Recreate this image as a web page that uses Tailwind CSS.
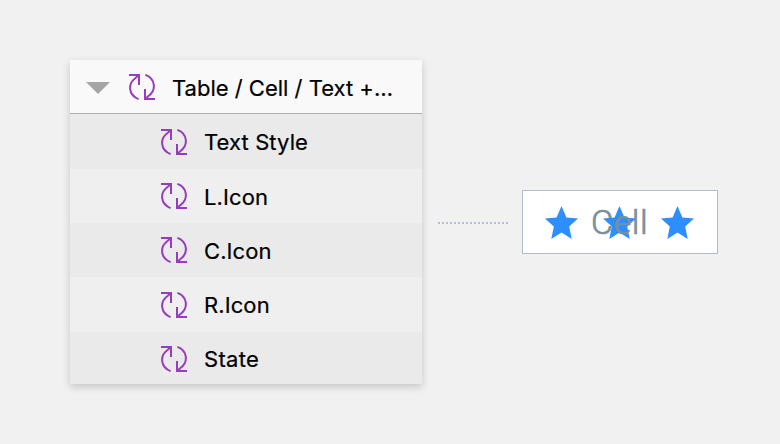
<!DOCTYPE html>
<html lang="en">
<head>
    <meta charset="UTF-8">
    <meta name="viewport" content="width=device-width, initial-scale=1.0">
    <title>Table Cell Overrides</title>
    <script src="https://cdn.jsdelivr.net/npm/@tailwindcss/browser@4"></script>
</head>
<body class="bg-[#f1f1f1] h-screen overflow-hidden font-['Inter',sans-serif] text-[22px] text-black">
    <!-- Shared shapes -->
    <svg class="hidden">
        <symbol id="swap" viewBox="0 0 26 26">
            <g fill="none" stroke="#963cbd" stroke-width="2">
                <path d="M0 1H10V11M10 1L6.5 4C-1.4 9.6-0.8 21.2 9.6 25.1" />
                <path d="M26 25H16V15M16 25L19.5 22C27.4 16.4 26.8 4.8 16.4 0.9" />
            </g>
        </symbol>
        <symbol id="star" viewBox="0 0 33 33">
            <path fill="#2d8eff" d="M16.5 0L21.4 11.6L33 12.6L24.2 20.6L26.7 33L16.5 26.4L6.3 33L8.8 20.6L0 12.6L11.6 11.6z" />
        </symbol>
    </svg>

    <div class="flex items-start pl-[70px] pt-[60px]">
        <!-- Overrides panel -->
        <div class="w-[352px] h-[324px] shrink-0 flex flex-col bg-[#eaeaea] shadow-[0_3px_8px_rgba(0,0,0,0.18)]">
            <div class="h-[54px] shrink-0 flex items-center bg-[#f9f9f9] border-b border-[#b0b0b0] pl-4">
                <svg class="w-6 h-3 mt-0.5" viewBox="0 0 24 12"><path fill="#a5a5a5" d="M0 0H24L12 12z" /></svg>
                <svg class="w-[26px] h-[26px] ml-[19px] mt-px"><use href="#swap" /></svg>
                <span class="ml-[17px] mt-1 whitespace-nowrap [-webkit-text-stroke:0.2px_#000]">Table / Cell / Text +…</span>
            </div>
            <div class="h-[55px] shrink-0 flex items-center bg-[#eaeaea] pl-[91px]">
                <svg class="w-[26px] h-[26px]"><use href="#swap" /></svg>
                <span class="ml-[17px] mt-0.5 tracking-[0.1px] [-webkit-text-stroke:0.2px_#000]">Text Style</span>
            </div>
            <div class="h-[54px] shrink-0 flex items-center bg-[#efefef] pl-[91px]">
                <svg class="w-[26px] h-[26px]"><use href="#swap" /></svg>
                <span class="ml-[17px] mt-0.5 tracking-[0.1px] [-webkit-text-stroke:0.2px_#000]">L.Icon</span>
            </div>
            <div class="h-[54px] shrink-0 flex items-center bg-[#eaeaea] pl-[91px]">
                <svg class="w-[26px] h-[26px]"><use href="#swap" /></svg>
                <span class="ml-[17px] mt-0.5 tracking-[0.1px] [-webkit-text-stroke:0.2px_#000]">C.Icon</span>
            </div>
            <div class="h-[55px] shrink-0 flex items-center bg-[#efefef] pl-[91px]">
                <svg class="w-[26px] h-[26px]"><use href="#swap" /></svg>
                <span class="ml-[17px] mt-0.5 tracking-[0.1px] [-webkit-text-stroke:0.2px_#000]">R.Icon</span>
            </div>
            <div class="h-[52px] shrink-0 flex items-center bg-[#eaeaea] pl-[91px]">
                <svg class="w-[26px] h-[26px] mt-0.5"><use href="#swap" /></svg>
                <span class="ml-[17px] mt-[3px] tracking-[0.3px] [-webkit-text-stroke:0.2px_#000]">State</span>
            </div>
        </div>

        <!-- Connector -->
        <svg class="w-[70px] h-0.5 shrink-0 ml-4 mt-[162px]" viewBox="0 0 70 2">
            <path d="M0 1H70" stroke="#b7bdcd" stroke-width="2" stroke-dasharray="2 2" />
        </svg>

        <!-- Cell -->
        <div class="relative w-[196px] h-16 shrink-0 ml-3.5 mt-[130px] flex items-start bg-white border border-[#b3bccb] pl-[22px] pt-[15px] gap-[25px]">
            <svg class="w-[33px] h-[33px]"><use href="#star" /></svg>
            <svg class="w-[33px] h-[33px]"><use href="#star" /></svg>
            <svg class="w-[33px] h-[33px]"><use href="#star" /></svg>
            <span class="absolute left-[68px] top-[11px] font-['Roboto',sans-serif] font-light text-[34px] leading-10 tracking-[0.6px] text-[#78909c] [-webkit-text-stroke:0.7px_#78909c]">Cell</span>
        </div>
    </div>
</body>
</html>
